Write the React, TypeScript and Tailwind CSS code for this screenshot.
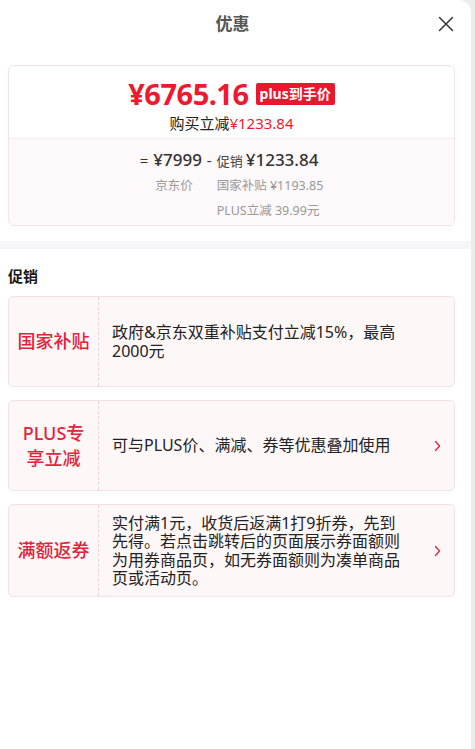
const promos = [
  {
    label: "国家补贴",
    text: "政府&京东双重补贴支付立减15%，最高2000元",
    arrow: false,
  },
  {
    label: "PLUS专享立减",
    text: "可与PLUS价、满减、券等优惠叠加使用",
    arrow: true,
  },
  {
    label: "满额返券",
    text: "实付满1元，收货后返满1打9折券，先到先得。若点击跳转后的页面展示券面额则为用券商品页，如无券面额则为凑单商品页或活动页。",
    arrow: true,
  },
];

function Chevron() {
  return (
    <svg width="7" height="12" viewBox="0 0 7 12" className="text-[#e2233b]">
      <path
        d="M1.5 1.5L5.5 6L1.5 10.5"
        fill="none"
        stroke="currentColor"
        strokeWidth="1.3"
        strokeLinecap="round"
        strokeLinejoin="round"
      />
    </svg>
  );
}

export default function App() {
  return (
    <div
      className="min-h-[749px] bg-[#ececec] pr-[4px]"
      style={{ fontFamily: '"Noto Sans", "Noto Sans CJK SC", sans-serif' }}
    >
      <div className="min-h-[749px] bg-white rounded-tr-[12px]">
        {/* header */}
        <div className="relative h-[48px] flex items-center justify-center pr-[6px]">
          <span className="text-[17px] font-bold text-[#555]">优惠</span>
          <button className="absolute right-[16px] top-[15px] w-[18px] h-[18px] flex items-center justify-center">
            <svg width="16" height="16" viewBox="0 0 16 16">
              <path
                d="M1.5 1.5L14.5 14.5M14.5 1.5L1.5 14.5"
                stroke="#333"
                strokeWidth="1.5"
                strokeLinecap="round"
              />
            </svg>
          </button>
        </div>

        {/* price card */}
        <div className="ml-[8px] mr-[16px] mt-[17px] border border-[#f1e3e6] rounded-[6px] overflow-hidden">
          <div className="h-[72px] flex flex-col items-center pt-[13px]">
            <div className="flex items-center gap-[7px] leading-none">
              <span className="text-[29px] font-bold text-[#f0172e] tracking-[-0.5px]">
                ¥6765.16
              </span>
              <span className="bg-[#e8192e] text-white text-[14px] font-bold px-[4px] h-[22px] flex items-center rounded-[2px]">
                plus到手价
              </span>
            </div>
            <div className="mt-[6px] text-[15px] leading-[18px] text-[#222]">
              购买立减<span className="text-[#f0172e]">¥1233.84</span>
            </div>
          </div>
          <div className="border-t border-[#f5eaec] bg-[#fdf8f9] h-[87px] flex justify-center pt-[10px]">
            <div className="grid grid-cols-[auto_auto_auto_auto] gap-x-[5px] items-baseline">
              <span className="text-[15px] text-[#333]">=</span>
              <span className="text-[17px] font-medium text-[#333] leading-[22px]">
                ¥7999
              </span>
              <span className="text-[15px] text-[#333]">-</span>
              <span className="leading-[22px]">
                <span className="text-[13px] text-[#444]">促销</span>
                <span className="ml-[3px] text-[17px] font-medium text-[#333]">
                  ¥1233.84
                </span>
              </span>
              <span />
              <span className="text-[12.5px] text-[#999] leading-[22px] pl-[2px]">
                京东价
              </span>
              <span />
              <span className="text-[12.5px] text-[#999] leading-[22px]">
                国家补贴 ¥1193.85
              </span>
              <span />
              <span />
              <span />
              <span className="text-[12.5px] text-[#999] leading-[22px]">
                PLUS立减 39.99元
              </span>
            </div>
          </div>
        </div>

        <div className="mt-[15px] h-[8px] bg-[#f6f6f8]" />

        {/* promotions */}
        <div className="pl-[8px] pr-[16px] pt-[17px]">
          <div className="text-[15px] font-bold text-[#1a1a1a] leading-[20px]">
            促销
          </div>
          <div className="mt-[10px] flex flex-col gap-[13px]">
            {promos.map((p) => (
              <div
                key={p.label}
                className="min-h-[91px] flex bg-[#fef7f8] border border-[#f3e0e4] rounded-[5px]"
              >
                <div className="w-[90px] shrink-0 flex items-center justify-center border-r border-dashed border-[#ecd2d8]">
                  <span className="w-[74px] text-center text-[18px] font-medium leading-[25px] text-[#e2233b]">
                    {p.label}
                  </span>
                </div>
                <div className="flex-1 flex items-center pl-[13px] pr-[13px] py-[9px]">
                  <p className="w-[294px] text-[16px] leading-[18.3px] text-[#222]">
                    {p.text}
                  </p>
                  <div className="ml-auto">{p.arrow && <Chevron />}</div>
                </div>
              </div>
            ))}
          </div>
        </div>
      </div>
    </div>
  );
}
